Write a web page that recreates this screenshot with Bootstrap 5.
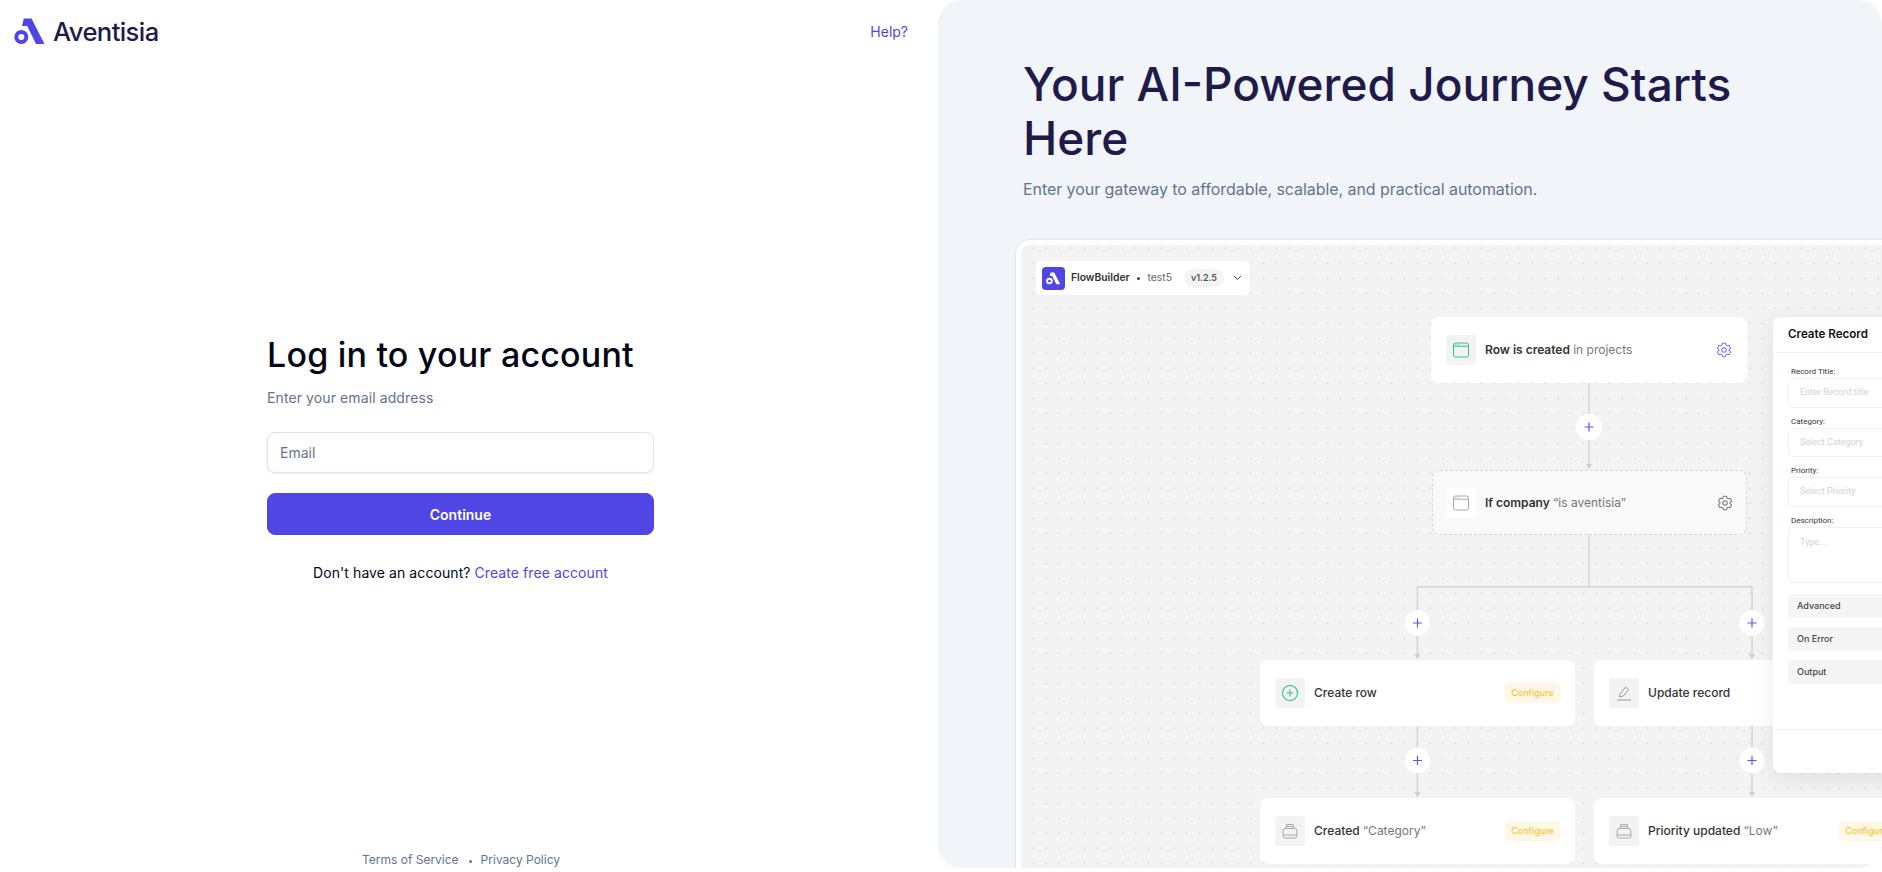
<!DOCTYPE html>
<html lang="en">
<head>
    <meta charset="UTF-8" />
    <meta name="viewport" content="width=device-width, initial-scale=1.0" />
    <title>Log in - Aventisia</title>
    <link href="https://cdn.jsdelivr.net/npm/bootstrap@5.3.0/dist/css/bootstrap.min.css" rel="stylesheet">
    <style>
        body { font-family: Inter, "Liberation Sans", sans-serif; background: #fff; overflow: hidden; }
        a { text-decoration: none; }
        .brand-link { color: #4f46e5; }
        .page-wrap { height: 868px; }

        /* left side */
        .login-side { width: 938px; flex: none; }
        .login-head { padding: 18px 30px 0 14px; }
        .brand-name { font-size: 25.6px; font-weight: 500; color: #1e1b4b; letter-spacing: -0.6px; line-height: 26px; margin-left: 7px; }
        .help-link { font-size: 14px; margin-top: 3px; }
        .login-box { width: 387px; padding-top: 290px; margin-left: 267px; }
        .login-title { font-size: 34px; font-weight: 500; letter-spacing: .2px; line-height: 40px; color: #020617; margin-bottom: 13px; }
        .login-sub { font-size: 14px; letter-spacing: .1px; line-height: 20px; color: #64748b; margin-bottom: 24px; }
        .login-input.form-control { height: 41px; border: 1px solid #e2e0f3; border-radius: 8px; font-size: 14px; padding: 0 12px; box-shadow: 0 1px 2px rgba(0,0,0,.05); }
        .login-input.form-control::placeholder { color: #64748b; }
        .login-btn.btn { height: 42px; margin-top: 20px; background: #4f46e5; border-color: #4f46e5; color: #fff; font-size: 14px; font-weight: 600; border-radius: 8px; }
        .signup-line { margin-top: 28px; font-size: 14px; letter-spacing: .08px; line-height: 20px; color: #020617; }
        .legal-line { font-size: 12px; line-height: 16px; color: #64748b; padding: 0 16px 0 0; }
        .legal-line a { color: #64748b; }
        .legal-dot { width: 3px; height: 3px; border-radius: 50%; background: #64748b; margin: 2px 9px 0 10px; }

        /* right side */
        .promo-side { flex: 1; min-width: 0; background: #f1f4f9; border-radius: 24px; overflow: hidden; padding: 57px 0 0 85px; }
        .promo-title { font-size: 46px; font-weight: 500; line-height: 54px; color: #1e1b4b; max-width: 730px; margin: 0; }
        .promo-sub { font-size: 16px; line-height: 24px; color: #64748b; margin: 12px 0 0; letter-spacing: -.065px; }
        .shot-frame { width: 1000px; height: 800px; margin: 39px 0 0 -7px; border: 5px solid #fff; border-radius: 14px; box-shadow: 0 0 2px rgba(30,27,75,.2); overflow: hidden; }
        .shot-canvas { position: relative; width: 100%; height: 100%; background-color: #f3f3f3; background-image: radial-gradient(circle, #dcdcdc .9px, transparent 1.1px); background-size: 12.8px 15px; background-position: 5.9px -4.2px; color: #333; }
        .wire-layer { position: absolute; left: 0; top: 0; }

        .tool-pill { position: absolute; left: 15px; top: 16px; width: 214px; height: 34px; background: #fff; border-radius: 5px; padding-left: 6px; font-size: 10.3px; }
        .tool-logo { width: 23px; height: 23px; background: #4f46e5; border-radius: 4px; margin-right: 6px; }
        .tool-name { font-weight: 600; color: #333; }
        .tool-dot { width: 3px; height: 3px; background: #444; border-radius: 50%; margin: 0 7.5px; }
        .tool-test { color: #666; }
        .tool-ver { width: 40px; height: 18px; border-radius: 9px; background: #f3f3f3; margin-left: 12px; font-size: 9px; font-weight: 600; color: #555; }
        .tool-chev { margin-left: 9px; }

        .flow-node { position: absolute; width: 315px; height: 66px; background: #fff; border-radius: 8px; padding: 0 15px; font-size: 12px; font-weight: 500; color: #333; }
        .flow-node b { font-weight: 600; }
        .flow-node i { font-style: normal; font-weight: 400; color: #777; }
        .node-a { left: 410px; top: 72px; width: 316px; }
        .node-b { left: 411px; top: 225px; height: 65px; background: #f9f9f9; border: 1.5px dashed #d6d6d6; padding: 0 13px; }
        .node-c { left: 239px; top: 415px; }
        .node-d { left: 573px; top: 415px; }
        .node-e { left: 239px; top: 553px; }
        .node-f { left: 573px; top: 553px; }
        .node-icon { width: 30px; height: 30px; background: #f3f3f3; border-radius: 3px; margin-right: 9px; flex: none; }
        .node-b .node-icon { background: #fff; }
        .node-cfg { width: 55px; height: 20px; background: #fff8e6; color: #ffc233; border-radius: 4px; font-size: 9px; font-weight: 500; margin-right: 0; }
        .node-gear { margin-right: -1px; }
        .ico-green { color: #2bc08e; }
        .ico-gray { color: #a8a8a8; }
        .gear-blue { color: #7a70f0; }
        .gear-gray { color: #777; }

        .record-panel { position: absolute; left: 752px; top: 72px; width: 400px; height: 456px; background: #fff; border-radius: 8px; box-shadow: 0 6px 24px rgba(0,0,0,.08); }
        .record-head { height: 36px; padding-left: 15px; font-size: 11.6px; font-weight: 600; color: #111; border-bottom: 1px solid #f2f2f2; flex: none; }
        .record-body { padding: 14px 15px 0; }
        .record-label { font-family: Roboto, Inter, sans-serif; font-size: 8px; line-height: 10px; padding-left: 3px; margin-bottom: 1px; color: #333; }
        .record-field { height: 29.5px; border: 1px solid #f2f2f2; border-radius: 5px; padding: 0 11px; font-size: 9px; color: #d2d2d2; margin-bottom: 9px; font-family: Roboto, Inter, sans-serif; }
        .record-area { height: 56px; padding-top: 8px; margin-bottom: 11.5px; }
        .record-row { height: 24px; background: #f5f5f5; border-radius: 4px; padding-left: 9px; margin-bottom: 9px; font-size: 9px; font-weight: 500; color: #444; }
        .record-foot { height: 44px; border-top: 1px solid #f2f2f2; flex: none; }
    </style>
</head>
<body>
    <svg width="0" height="0" class="position-absolute">
        <symbol id="ico-gear" viewBox="0 0 24 24">
            <path fill="none" stroke="currentColor" stroke-width="1.4" d="M9.594 3.94c.09-.542.56-.94 1.11-.94h2.593c.55 0 1.02.398 1.11.94l.213 1.281c.063.374.313.686.645.87.074.04.147.083.22.127.325.196.72.257 1.075.124l1.217-.456a1.125 1.125 0 0 1 1.37.49l1.296 2.247a1.125 1.125 0 0 1-.26 1.431l-1.003.827c-.293.241-.438.613-.43.992a7.723 7.723 0 0 1 0 .255c-.008.378.137.75.43.991l1.004.827c.424.35.534.955.26 1.43l-1.298 2.247a1.125 1.125 0 0 1-1.369.491l-1.217-.456c-.355-.133-.75-.072-1.076.124a6.47 6.47 0 0 1-.22.128c-.331.183-.581.495-.644.869l-.213 1.281c-.09.543-.56.94-1.11.94h-2.594c-.55 0-1.019-.398-1.11-.94l-.213-1.281c-.062-.374-.312-.686-.644-.87a6.52 6.52 0 0 1-.22-.127c-.325-.196-.72-.257-1.076-.124l-1.217.456a1.125 1.125 0 0 1-1.369-.49l-1.297-2.247a1.125 1.125 0 0 1 .26-1.431l1.004-.827c.292-.24.437-.613.43-.991a6.932 6.932 0 0 1 0-.255c.007-.38-.138-.751-.43-.992l-1.004-.827a1.125 1.125 0 0 1-.26-1.43l1.297-2.247a1.125 1.125 0 0 1 1.37-.491l1.216.456c.356.133.751.072 1.076-.124.072-.044.146-.086.22-.128.332-.183.582-.495.644-.869l.214-1.28Z"/>
            <circle cx="12" cy="12" r="3" fill="none" stroke="currentColor" stroke-width="1.4"/>
        </symbol>
        <symbol id="ico-window" viewBox="0 0 18 18">
            <rect x="1.5" y="2" width="15" height="14" rx="2" fill="none" stroke="currentColor" stroke-width="1"/>
            <path d="M1.5 5.2h15" fill="none" stroke="currentColor" stroke-width="1"/>
            <path d="M3 3.6h.8M4.8 3.6h.8M6.6 3.6h.8" stroke="currentColor" stroke-width=".8"/>
        </symbol>
        <symbol id="ico-stack" viewBox="0 0 18 18">
            <path d="M5 6.5 5.8 2.5h6.4l.8 4M5.4 4.5h7.2" fill="none" stroke="currentColor" stroke-width="1"/>
            <rect x="2.2" y="6.5" width="13.6" height="9.5" rx="2" fill="none" stroke="currentColor" stroke-width="1"/>
            <path d="M2.2 13h13.6" fill="none" stroke="currentColor" stroke-width="1"/>
        </symbol>
        <symbol id="ico-mark" viewBox="0 0 32 27">
            <path fill="currentColor" d="M9.8.5h7.7L30.5 26H22L13.2 8H8z"/>
            <path fill="currentColor" fill-rule="evenodd" d="M7.3 12a7 7 0 1 1 0 14 7 7 0 0 1 0-14zm0 4a3 3 0 1 0 0 6 3 3 0 0 0 0-6z"/>
        </symbol>
    </svg>

    <div class="page-wrap d-flex">
        <!-- Login side -->
        <div class="login-side d-flex flex-column">
            <div class="login-head d-flex justify-content-between">
                <a href="#" class="d-flex align-items-center">
                    <svg width="32" height="27" class="brand-link"><use href="#ico-mark"/></svg>
                    <span class="brand-name">Aventisia</span>
                </a>
                <a href="#" class="help-link brand-link">Help?</a>
            </div>

            <div class="flex-grow-1">
                <form class="login-box">
                    <h1 class="login-title">Log in to your account</h1>
                    <p class="login-sub">Enter your email address</p>
                    <input type="email" class="form-control login-input" placeholder="Email">
                    <button type="button" class="btn login-btn w-100 d-flex align-items-center justify-content-center">Continue</button>
                    <p class="signup-line text-center">Don't have an account? <a href="#" class="brand-link">Create free account</a></p>
                </form>
            </div>

            <div class="legal-line d-flex justify-content-center align-items-center">
                <a href="#">Terms of Service</a>
                <span class="legal-dot"></span>
                <a href="#">Privacy Policy</a>
            </div>
        </div>

        <!-- Promo side -->
        <div class="promo-side">
            <h2 class="promo-title">Your AI-Powered Journey Starts Here</h2>
            <p class="promo-sub">Enter your gateway to affordable, scalable, and practical automation.</p>

            <div class="shot-frame">
                <div class="shot-canvas">
                    <!-- connectors, in page coordinates -->
                    <svg class="wire-layer" width="1000" height="800" viewBox="1021 244 1000 800">
                        <g fill="none" stroke="#d6d6d6" stroke-width="1.6">
                            <path d="M1589 382V465M1589 534V585M1417.5 656V585.8H1752V656M1417.5 725V792M1752 725V792"/>
                        </g>
                        <g fill="#cfcfcf">
                            <path d="M1586 463h6l-3 5.5zM1414.5 653h6l-3 5.5zM1749 653h6l-3 5.5zM1414.5 791h6l-3 5.5zM1749 791h6l-3 5.5z"/>
                        </g>
                        <g fill="#fff">
                            <circle cx="1589" cy="426" r="13"/>
                            <circle cx="1417.5" cy="622" r="12.7"/>
                            <circle cx="1752" cy="622" r="12.7"/>
                            <circle cx="1417.5" cy="759.5" r="12.7"/>
                            <circle cx="1752" cy="759.5" r="12.7"/>
                        </g>
                        <g fill="none" stroke="#5f55ea" stroke-width="1.2">
                            <path d="M1584.5 426h9M1589 421.5v9M1413 622h9M1417.5 617.5v9M1747.5 622h9M1752 617.5v9M1413 759.5h9M1417.5 755v9M1747.5 759.5h9M1752 755v9"/>
                        </g>
                    </svg>

                    <div class="tool-pill d-flex align-items-center">
                        <span class="tool-logo d-flex align-items-center justify-content-center text-white">
                            <svg width="15" height="13"><use href="#ico-mark"/></svg>
                        </span>
                        <span class="tool-name">FlowBuilder</span>
                        <span class="tool-dot"></span>
                        <span class="tool-test">test5</span>
                        <span class="tool-ver d-flex align-items-center justify-content-center">v1.2.5</span>
                        <svg class="tool-chev" width="9" height="6" viewBox="0 0 9 6"><path d="M1 1l3.5 3.5L8 1" fill="none" stroke="#444" stroke-width="1"/></svg>
                    </div>

                    <div class="flow-node node-a d-flex align-items-center">
                        <span class="node-icon d-flex align-items-center justify-content-center">
                            <svg class="ico-green" width="18" height="18"><use href="#ico-window"/></svg>
                        </span>
                        <span><b>Row is created</b> <i>in projects</i></span>
                        <svg class="ms-auto node-gear gear-blue" width="18" height="18"><use href="#ico-gear"/></svg>
                    </div>

                    <div class="flow-node node-b d-flex align-items-center">
                        <span class="node-icon d-flex align-items-center justify-content-center">
                            <svg class="ico-gray" width="18" height="18"><use href="#ico-window"/></svg>
                        </span>
                        <span><b>If company</b> <i>“is aventisia”</i></span>
                        <svg class="ms-auto node-gear gear-gray" width="18" height="18"><use href="#ico-gear"/></svg>
                    </div>

                    <div class="flow-node node-c d-flex align-items-center">
                        <span class="node-icon d-flex align-items-center justify-content-center">
                            <svg width="18" height="18" viewBox="0 0 18 18"><circle cx="9" cy="9" r="7.5" fill="none" stroke="#2bc08e" stroke-width="1.1"/><path d="M9 5.5v7M5.5 9h7" fill="none" stroke="#2bc08e" stroke-width="1.1"/></svg>
                        </span>
                        <span>Create row</span>
                        <span class="node-cfg ms-auto d-flex align-items-center justify-content-center">Configure</span>
                    </div>

                    <div class="flow-node node-d d-flex align-items-center">
                        <span class="node-icon d-flex align-items-center justify-content-center">
                            <svg width="18" height="18" viewBox="0 0 18 18"><path d="M4.5 13 5.3 9.6 10.5 3.2l3 2.4-5.2 6.4z" fill="none" stroke="#999" stroke-width="1"/><path d="M2 16h14" fill="none" stroke="#999" stroke-width="1"/></svg>
                        </span>
                        <span>Update record</span>
                    </div>

                    <div class="flow-node node-e d-flex align-items-center">
                        <span class="node-icon d-flex align-items-center justify-content-center">
                            <svg class="ico-gray" width="18" height="18"><use href="#ico-stack"/></svg>
                        </span>
                        <span>Created <i>“Category”</i></span>
                        <span class="node-cfg ms-auto d-flex align-items-center justify-content-center">Configure</span>
                    </div>

                    <div class="flow-node node-f d-flex align-items-center">
                        <span class="node-icon d-flex align-items-center justify-content-center">
                            <svg class="ico-gray" width="18" height="18"><use href="#ico-stack"/></svg>
                        </span>
                        <span>Priority updated <i>“Low”</i></span>
                        <span class="node-cfg ms-auto d-flex align-items-center justify-content-center">Configure</span>
                    </div>

                    <!-- Create Record side panel -->
                    <div class="record-panel d-flex flex-column">
                        <div class="record-head d-flex align-items-center">Create Record</div>
                        <div class="record-body flex-grow-1">
                            <div class="record-label">Record Title:</div>
                            <div class="record-field d-flex align-items-center">Enter Record title</div>
                            <div class="record-label">Category:</div>
                            <div class="record-field d-flex align-items-center">Select Category</div>
                            <div class="record-label">Priority:</div>
                            <div class="record-field d-flex align-items-center">Select Priority</div>
                            <div class="record-label">Description:</div>
                            <div class="record-field record-area">Type...</div>
                            <div class="record-row d-flex align-items-center">Advanced</div>
                            <div class="record-row d-flex align-items-center">On Error</div>
                            <div class="record-row d-flex align-items-center">Output</div>
                        </div>
                        <div class="record-foot"></div>
                    </div>
                </div>
            </div>
        </div>
    </div>

    <script src="https://cdn.jsdelivr.net/npm/bootstrap@5.3.0/dist/js/bootstrap.bundle.min.js"></script>
</body>
</html>
